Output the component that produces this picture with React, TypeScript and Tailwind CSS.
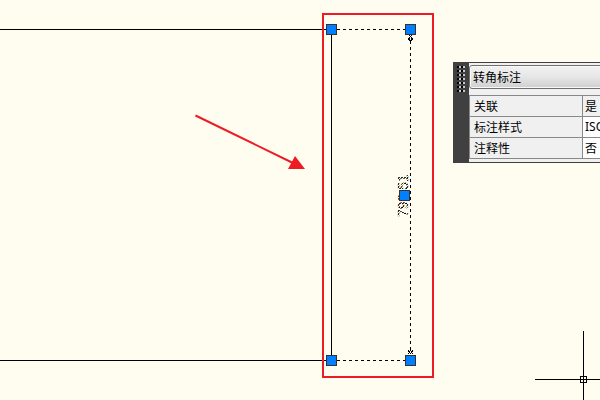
const gripClass = "fill-[#0080ff] stroke-[#333333]"

const grips = [
  { x: 331, y: 29 },
  { x: 410, y: 29 },
  { x: 404, y: 195 },
  { x: 331, y: 360 },
  { x: 410, y: 360 },
]

const styles = ["ISO-25", "Standard"]

export default function App() {
  return (
    <main className="relative h-screen w-full overflow-hidden bg-[#fffcf0] font-['Noto_Sans_CJK_SC',sans-serif]">
      <Drawing />
      <QuickProperties />
    </main>
  )
}

function Drawing() {
  return (
    <svg
      className="absolute top-0 left-0 h-[400px] w-[600px]"
      viewBox="0 0 600 400"
      role="img"
      aria-label="Drawing"
    >
      <defs>
        <pattern id="dots" width="3" height="3" patternUnits="userSpaceOnUse">
          <path d="M0 0h2v1h-2zM1 1h2v1h-2zM0 2h1v1h-1zM2 2h1v1h-1z" className="fill-black" />
        </pattern>
      </defs>

      {/* rectangle outline */}
      <g className="fill-none stroke-black" shapeRendering="crispEdges">
        <path d="M0 29.5H331.5V360.5H0" />
        <path d="M337 29.5H405M337 360.5H405" strokeDasharray="3 3" />
        <path d="M410.5 41V350" strokeDasharray="3 3" />
      </g>

      {/* dimension arrowheads */}
      <g className="fill-black" shapeRendering="crispEdges">
        <path d="M409 35h1v1h-1zM411 35h1v1h-1zM410 36h1v1h-1zM409 37h1v1h-1zM411 37h1v1h-1zM408 38h2v2h-2zM411 38h2v2h-2zM409 40h3v1h-3zM410 41h1v1h-1z" />
        <path d="M408 350h1v1h-1zM410 350h1v1h-1zM412 350h1v1h-1zM408 351h2v1h-2zM411 351h2v1h-2zM409 352h1v1h-1zM411 352h1v1h-1zM408 353h1v1h-1zM410 353h1v1h-1zM412 353h1v1h-1z" />
      </g>

      <text
        transform="translate(408 217) rotate(-90)"
        fill="url(#dots)"
        className="font-['Liberation_Sans_Narrow','Liberation_Sans',sans-serif] text-[14px]"
      >
        793.51
      </text>

      {/* highlighted area */}
      <rect x="323" y="14" width="110" height="363" className="fill-none stroke-[#ed1c24] stroke-2" />
      <path d="M195.500 115.500L293 163" className="fill-none stroke-[#ed1c24] stroke-2" />
      <path d="M295 156L305 169H288Z" className="fill-[#ed1c24]" />

      {grips.map((g) => (
        <rect
          key={`${g.x}-${g.y}`}
          x={g.x - 4.5}
          y={g.y - 4.5}
          width="10"
          height="10"
          className={gripClass}
        />
      ))}

      {/* crosshair cursor */}
      <g className="fill-none stroke-black" shapeRendering="crispEdges">
        <path d="M535 379.5H600M583.5 331V400" />
        <rect x="580.5" y="376.5" width="6" height="6" />
      </g>
    </svg>
  )
}

function QuickProperties() {
  return (
    <aside className="absolute top-[62px] left-[453px] flex w-[260px] border-y border-[#404040] bg-[#f0f0f0] text-[12px] text-black">
      <div className="w-4 shrink-0 bg-[#404040] pt-[3px] pl-1">
        <Handle />
      </div>
      <div className="min-w-0 flex-1 pt-[2px] pb-[3px]">
        <select
          aria-label="Object type"
          className="block h-6 w-full appearance-none rounded-[3px] border border-[#707070] bg-linear-to-b from-[#f2f2f2] via-[#e6e6e6] to-[#cfcfcf] px-[3px] leading-5 shadow-[inset_0_0_0_1px_#f8f8f8]"
        >
          <option>转角标注</option>
        </select>
        <table className="mt-[6px] w-full border-collapse">
          <tbody>
            <Row label="关联" value="是" />
            <tr className="h-[21px]">
              <Label text="标注样式" />
              <td className="border border-[#888888] bg-white p-0 pl-[2px]">
                <select
                  aria-label="标注样式"
                  className="block h-5 w-full appearance-none font-['Noto_Sans','Noto_Sans_CJK_SC',sans-serif]"
                >
                  {styles.map((s) => (
                    <option key={s}>{s}</option>
                  ))}
                </select>
              </td>
            </tr>
            <Row label="注释性" value="否" editable />
          </tbody>
        </table>
      </div>
    </aside>
  )
}

function Row({ label, value, editable }: { label: string; value: string; editable?: boolean }) {
  return (
    <tr className="h-[21px]">
      <Label text={label} />
      <td
        className={
          editable
            ? "border border-[#888888] bg-white p-0 pl-[2px] leading-5"
            : "border border-[#888888] p-0 pl-[2px] leading-5"
        }
      >
        {value}
      </td>
    </tr>
  )
}

function Label({ text }: { text: string }) {
  return (
    <th
      scope="row"
      className="w-[113px] border border-[#888888] p-0 pl-1 text-left leading-5 font-normal"
    >
      {text}
    </th>
  )
}

function Handle() {
  const rows = [0, 4, 8, 12, 16, 20, 24]

  return (
    <svg width="8" height="27" viewBox="0 0 8 27" shapeRendering="crispEdges" aria-hidden="true">
      {rows.map((y) => (
        <g key={y}>
          <path d={`M0 ${y}h8v2h-8z`} className="fill-black" />
          <path
            d={`M2 ${y}h2v2h-2zM6 ${y}h2v2h-2z`}
            className="fill-[#c8c8c8]"
          />
        </g>
      ))}
    </svg>
  )
}
